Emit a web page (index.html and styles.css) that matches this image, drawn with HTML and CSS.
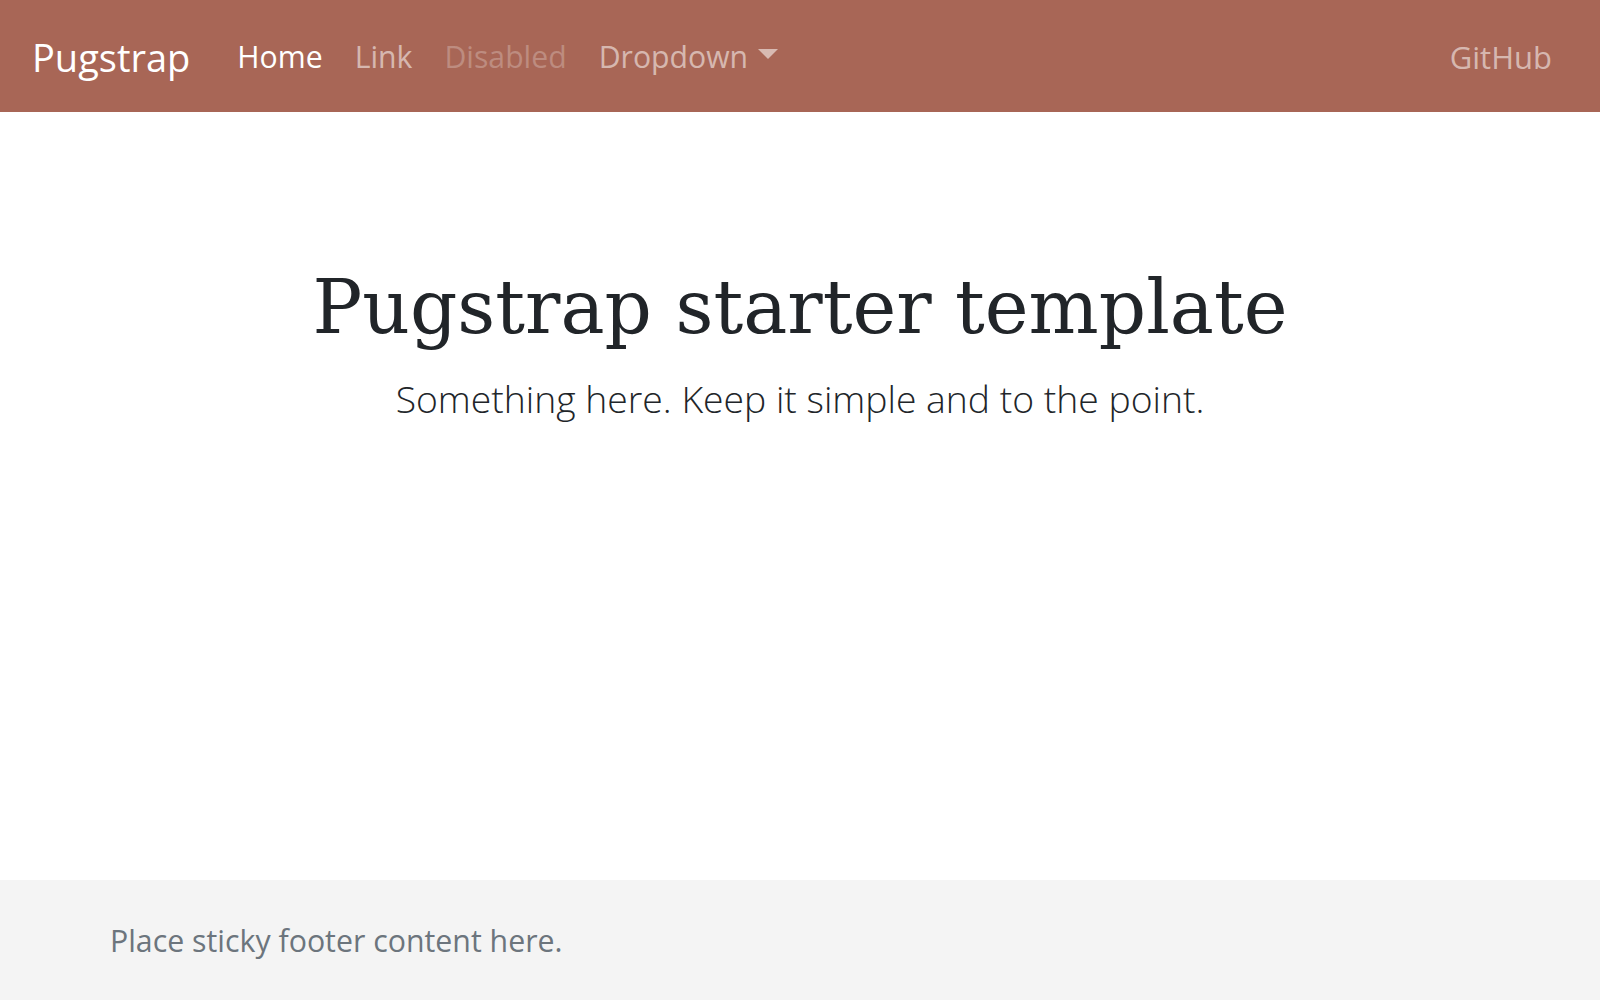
FILE: index.html
```html
<!DOCTYPE html>
<html lang="en">
<head>
<meta charset="utf-8">
<title>Pugstrap starter template</title>
<link rel="stylesheet" href="styles.css">
</head>
<body>
<nav class="navbar">
  <a class="brand" href="#">Pugstrap</a>
  <ul class="nav">
    <li><a class="nav-link active" href="#">Home</a></li>
    <li><a class="nav-link" href="#">Link</a></li>
    <li><a class="nav-link disabled" href="#">Disabled</a></li>
    <li><a class="nav-link dropdown" href="#">Dropdown<span class="caret"></span></a></li>
  </ul>
  <a class="nav-link github" href="#">GitHub</a>
</nav>
<main class="main">
  <h1 class="title">Pugstrap starter template</h1>
  <p class="lead">Something here. Keep it simple and to the point.</p>
</main>
<footer class="footer">
  <span class="footer-text">Place sticky footer content here.</span>
</footer>
</body>
</html>
```

FILE: styles.css
```css
html, body {
  margin: 0;
  padding: 0;
}
body {
  min-height: 100vh;
  display: flex;
  flex-direction: column;
  font-family: "Open Sans", "Noto Sans", sans-serif;
  color: #212529;
  background: #fff;
}
a { text-decoration: none; }

.navbar {
  height: 112px;
  flex: none;
  display: flex;
  align-items: center;
  background: #a86656;
  padding: 0 48px 0 32px;
  box-sizing: border-box;
}
.brand {
  color: #fff;
  font-size: 38px;
  margin-right: 47px;
  line-height: 1;
  position: relative;
  top: 1px;
}
.nav {
  list-style: none;
  margin: 0;
  padding: 0;
  display: flex;
  gap: 32px;
  position: relative;
  top: 1px;
}
.nav-link {
  display: flex;
  align-items: center;
  font-size: 30.2px;
  line-height: 1;
  color: rgba(255,255,255,.55);
}
.nav-link.active { color: #fff; }
.nav-link.disabled { color: rgba(255,255,255,.25); }
.caret {
  display: inline-block;
  width: 0;
  height: 0;
  margin-left: 10px;
  border-left: 10px solid transparent;
  border-right: 10px solid transparent;
  border-top: 10px solid currentColor;
  position: relative;
  top: -3px;
}
.github { margin-left: auto; font-size: 31px; position: relative; top: 1px; }

.main {
  flex: 1;
  text-align: center;
  padding-top: 151px;
}
.title {
  font-family: "DejaVu Serif", serif;
  font-weight: 400;
  font-size: 74px;
  line-height: 1.2;
  margin: 0;
  color: #212529;
}
.lead {
  font-size: 37.3px;
  font-weight: 300;
  margin: 21px 0 0;
  color: #212529;
}

.footer {
  height: 120px;
  flex: none;
  background: #f4f4f4;
  display: flex;
  align-items: center;
  padding-left: 110px;
}
.footer-text {
  font-size: 30.3px;
  color: #6c757d;
}
```
